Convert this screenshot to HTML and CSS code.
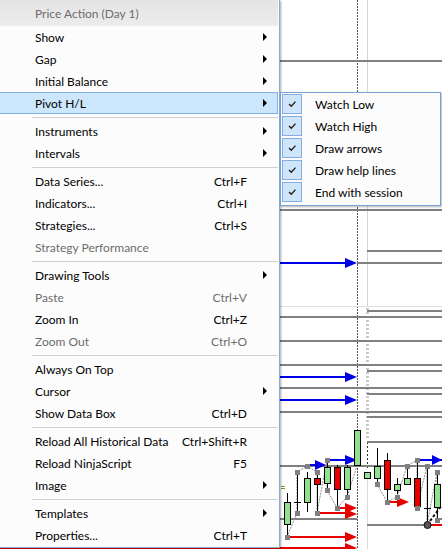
FILE: index.html
```html
<!DOCTYPE html>
<html>
<head>
<meta charset="utf-8">
<link rel="stylesheet" href="styles.css">
</head>
<body>
<div class="screen">
  <svg class="chart" width="442" height="549" viewBox="0 0 442 549" shape-rendering="crispEdges">
    <!-- vertical guides -->
    <line x1="367.5" y1="0" x2="367.5" y2="306" stroke="#d6d6d6" stroke-width="1"/>
    <line x1="367.5" y1="308" x2="367.5" y2="440" stroke="#c8c8c8" stroke-width="3" stroke-dasharray="2 2"/>
    <line x1="367.5" y1="442" x2="367.5" y2="470" stroke="#333" stroke-width="1" stroke-dasharray="2 2"/>
    <line x1="367.5" y1="472" x2="367.5" y2="549" stroke="#dcdcdc" stroke-width="1"/>
    <line x1="357.5" y1="0" x2="357.5" y2="549" stroke="#555" stroke-width="1" stroke-dasharray="2 1"/>
    <!-- panel divider -->
    <line x1="0" y1="306.5" x2="442" y2="306.5" stroke="#e0e0e0" stroke-width="1"/>
    <!-- gray level lines -->
    <g stroke="#808080" stroke-width="2">
      <line x1="0" y1="61" x2="442" y2="61"/>
      <line x1="0" y1="210" x2="442" y2="210"/>
      <line x1="367" y1="251" x2="442" y2="251"/>
      <line x1="357" y1="263" x2="442" y2="263"/>
      <line x1="367" y1="311" x2="442" y2="311"/>
      <line x1="0" y1="317" x2="442" y2="317"/>
      <line x1="0" y1="341" x2="442" y2="341"/>
      <line x1="0" y1="365" x2="442" y2="365"/>
      <line x1="367" y1="371" x2="442" y2="371"/>
      <line x1="0" y1="388" x2="442" y2="388"/>
      <line x1="367" y1="394" x2="442" y2="394"/>
      <line x1="0" y1="412" x2="442" y2="412"/>
      <line x1="367" y1="417" x2="442" y2="417"/>
      <line x1="367" y1="442" x2="442" y2="442"/>
      <line x1="0" y1="466" x2="442" y2="466"/>
      <line x1="0" y1="519" x2="357" y2="519"/>
      <line x1="437" y1="519" x2="442" y2="519"/>
      <line x1="367" y1="525" x2="442" y2="525"/>
    </g>
    <!-- dotted swing connectors -->
    <polyline points="287,537 297,513 297,472 307,466 317,472 317,513 327,460 327,490 337,508 347,497 357,466" fill="none" stroke="#909090" stroke-width="1" stroke-dasharray="2 1" shape-rendering="auto"/>
    <polyline points="377,484 387,502 397,497 407,466 417,460 417,508 427,466 427,525 437,472 437,520" fill="none" stroke="#909090" stroke-width="1" stroke-dasharray="2 1" shape-rendering="auto"/>
    <line x1="427" y1="525" x2="442" y2="505" stroke="#111" stroke-width="2" stroke-dasharray="3 2" shape-rendering="auto"/>
    <!-- blue arrows -->
    <g stroke="#0000e6" stroke-width="2">
      <line x1="280" y1="263" x2="347" y2="263"/>
      <line x1="280" y1="377" x2="347" y2="377"/>
      <line x1="280" y1="400" x2="347" y2="400"/>
      <line x1="328" y1="460" x2="347" y2="460"/>
      <line x1="310" y1="465" x2="318" y2="465"/>
      <line x1="418" y1="460" x2="442" y2="460"/>
    </g>
    <g fill="#0000e6" shape-rendering="auto">
      <polygon points="345,258 357,263 345,268"/>
      <polygon points="345,372 357,377 345,382"/>
      <polygon points="345,395 357,400 345,405"/>
      <polygon points="345,455 357,460 345,465"/>
      <polygon points="315,460 326,465 315,470"/>
      <polygon points="432,455 442,460 432,465"/>
    </g>
    <!-- red arrows -->
    <g stroke="#e60000" stroke-width="2">
      <line x1="338" y1="508" x2="347" y2="508"/>
      <line x1="318" y1="513" x2="347" y2="513"/>
      <line x1="287" y1="537" x2="347" y2="537"/>
      <line x1="0" y1="548" x2="347" y2="548"/>
      <line x1="387" y1="502" x2="399" y2="502"/>
      <line x1="430" y1="525" x2="442" y2="525"/>
    </g>
    <g fill="#e60000" shape-rendering="auto">
      <polygon points="345,503 357,508 345,513"/>
      <polygon points="345,509 357,514 345,519"/>
      <polygon points="345,532 357,537 345,542"/>
      <polygon points="345,543 357,548 345,553"/>
      <polygon points="397,497 409,502 397,507"/>
    </g>
    <!-- candle wicks -->
    <g stroke="#000" stroke-width="1">
      <line x1="287.5" y1="493" x2="287.5" y2="537"/>
      <line x1="297.5" y1="470" x2="297.5" y2="513"/>
      <line x1="294" y1="502.5" x2="301" y2="502.5"/>
      <line x1="307.5" y1="472" x2="307.5" y2="512"/>
      <line x1="317.5" y1="472" x2="317.5" y2="513"/>
      <line x1="327.5" y1="460" x2="327.5" y2="490"/>
      <line x1="337.5" y1="465" x2="337.5" y2="508"/>
      <line x1="347.5" y1="465" x2="347.5" y2="497"/>
      <line x1="377.5" y1="448" x2="377.5" y2="483"/>
      <line x1="387.5" y1="453" x2="387.5" y2="502"/>
      <line x1="397.5" y1="478" x2="397.5" y2="494"/>
      <line x1="407.5" y1="466" x2="407.5" y2="484"/>
      <line x1="417.5" y1="460" x2="417.5" y2="508"/>
      <line x1="427.5" y1="466" x2="427.5" y2="525"/>
      <line x1="424" y1="508.5" x2="431" y2="508.5"/>
      <line x1="437.5" y1="472" x2="437.5" y2="520"/>
    </g>
    <!-- candle bodies -->
    <g stroke="#000" stroke-width="1">
      <rect x="284.5" y="502.5" width="6" height="22" fill="#90e090"/>
      <rect x="304.5" y="478.5" width="6" height="24" fill="#90e090"/>
      <rect x="314.5" y="478.5" width="6" height="6" fill="#e60000"/>
      <rect x="324.5" y="467.5" width="6" height="16" fill="#90e090"/>
      <rect x="334.5" y="467.5" width="6" height="22" fill="#e60000"/>
      <rect x="344.5" y="467.5" width="6" height="22" fill="#90e090"/>
      <rect x="354.5" y="430.5" width="6" height="35" fill="#90e090"/>
      <rect x="364.5" y="472.5" width="6" height="6" fill="#90e090"/>
      <rect x="374.5" y="466.5" width="6" height="12" fill="#90e090"/>
      <rect x="384.5" y="460.5" width="6" height="29" fill="#e60000"/>
      <rect x="394.5" y="484.5" width="6" height="6" fill="#90e090"/>
      <rect x="404.5" y="478.5" width="6" height="6" fill="#90e090"/>
      <rect x="414.5" y="478.5" width="6" height="28" fill="#e60000"/>
      <rect x="434.5" y="484.5" width="6" height="23" fill="#90e090"/>
    </g>
    <!-- swing point markers -->
    <g fill="#808080">
      <rect x="285" y="535" width="5" height="5"/>
      <rect x="295" y="511" width="5" height="5"/>
      <rect x="295" y="470" width="5" height="5"/>
      <rect x="305" y="464" width="5" height="5"/>
      <rect x="315" y="470" width="5" height="5"/>
      <rect x="315" y="511" width="5" height="5"/>
      <rect x="325" y="458" width="5" height="5"/>
      <rect x="325" y="488" width="5" height="5"/>
      <rect x="335" y="506" width="5" height="5"/>
      <rect x="345" y="495" width="5" height="5"/>
      <rect x="375" y="482" width="5" height="5"/>
      <rect x="385" y="500" width="5" height="5"/>
      <rect x="395" y="495" width="5" height="5"/>
      <rect x="405" y="464" width="5" height="5"/>
      <rect x="415" y="458" width="5" height="5"/>
      <rect x="415" y="506" width="5" height="5"/>
      <rect x="425" y="464" width="5" height="5"/>
      <rect x="435" y="470" width="5" height="5"/>
      <rect x="435" y="518" width="5" height="5"/>
    </g>
    <circle cx="427.5" cy="525" r="3.5" fill="#555" stroke="#111" shape-rendering="auto"/>
    <g stroke="#6a9a3a" stroke-width="1">
      <line x1="281" y1="486.5" x2="285" y2="486.5"/>
      <line x1="281" y1="488.5" x2="285" y2="488.5"/>
    </g>
  </svg>

  <div class="menu">
    <div class="menu-title">Price Action (Day 1)</div>
    <div class="item"><span class="label">Show</span><span class="sub"><i class="tri"></i></span></div>
    <div class="item"><span class="label">Gap</span><span class="sub"><i class="tri"></i></span></div>
    <div class="item"><span class="label">Initial Balance</span><span class="sub"><i class="tri"></i></span></div>
    <div class="item active"><span class="label">Pivot H/L</span><span class="sub"><i class="tri"></i></span></div>
    <div class="sep"></div>
    <div class="item"><span class="label">Instruments</span><span class="sub"><i class="tri"></i></span></div>
    <div class="item"><span class="label">Intervals</span><span class="sub"><i class="tri"></i></span></div>
    <div class="sep"></div>
    <div class="item"><span class="label">Data Series...</span><span class="key">Ctrl+F</span><span class="sub"></span></div>
    <div class="item"><span class="label">Indicators...</span><span class="key">Ctrl+I</span><span class="sub"></span></div>
    <div class="item"><span class="label">Strategies...</span><span class="key">Ctrl+S</span><span class="sub"></span></div>
    <div class="item disabled"><span class="label">Strategy Performance</span><span class="sub"></span></div>
    <div class="sep"></div>
    <div class="item"><span class="label">Drawing Tools</span><span class="sub"><i class="tri"></i></span></div>
    <div class="item disabled"><span class="label">Paste</span><span class="key">Ctrl+V</span><span class="sub"></span></div>
    <div class="item"><span class="label">Zoom In</span><span class="key">Ctrl+Z</span><span class="sub"></span></div>
    <div class="item disabled"><span class="label">Zoom Out</span><span class="key">Ctrl+O</span><span class="sub"></span></div>
    <div class="sep"></div>
    <div class="item"><span class="label">Always On Top</span><span class="sub"></span></div>
    <div class="item"><span class="label">Cursor</span><span class="sub"><i class="tri"></i></span></div>
    <div class="item"><span class="label">Show Data Box</span><span class="key">Ctrl+D</span><span class="sub"></span></div>
    <div class="sep"></div>
    <div class="item"><span class="label">Reload All Historical Data</span><span class="key">Ctrl+Shift+R</span><span class="sub"></span></div>
    <div class="item"><span class="label">Reload NinjaScript</span><span class="key">F5</span><span class="sub"></span></div>
    <div class="item"><span class="label">Image</span><span class="sub"><i class="tri"></i></span></div>
    <div class="sep"></div>
    <div class="item"><span class="label">Templates</span><span class="sub"><i class="tri"></i></span></div>
    <div class="item"><span class="label">Properties...</span><span class="key">Ctrl+T</span><span class="sub"></span></div>
  </div>

  <div class="submenu">
    <div class="check-item"><span class="box"><svg width="20" height="20" viewBox="0 0 20 20"><path d="M7 10 L9.3 12.3 L13.5 7.6" fill="none" stroke="#1a1a1a" stroke-width="1.3"/></svg></span><span class="label">Watch Low</span></div>
    <div class="check-item"><span class="box"><svg width="20" height="20" viewBox="0 0 20 20"><path d="M7 10 L9.3 12.3 L13.5 7.6" fill="none" stroke="#1a1a1a" stroke-width="1.3"/></svg></span><span class="label">Watch High</span></div>
    <div class="check-item"><span class="box"><svg width="20" height="20" viewBox="0 0 20 20"><path d="M7 10 L9.3 12.3 L13.5 7.6" fill="none" stroke="#1a1a1a" stroke-width="1.3"/></svg></span><span class="label">Draw arrows</span></div>
    <div class="check-item"><span class="box"><svg width="20" height="20" viewBox="0 0 20 20"><path d="M7 10 L9.3 12.3 L13.5 7.6" fill="none" stroke="#1a1a1a" stroke-width="1.3"/></svg></span><span class="label">Draw help lines</span></div>
    <div class="check-item"><span class="box"><svg width="20" height="20" viewBox="0 0 20 20"><path d="M7 10 L9.3 12.3 L13.5 7.6" fill="none" stroke="#1a1a1a" stroke-width="1.3"/></svg></span><span class="label">End with session</span></div>
  </div>
</div>
</body>
</html>
```

FILE: styles.css
```css
* { box-sizing: border-box; }
html, body { margin: 0; padding: 0; background: #fff; }
body {
  font-family: "Segoe UI", "Lato", "Noto Sans", sans-serif;
  font-size: 12px;
  color: #000;
}
.screen {
  position: relative;
  width: 442px;
  height: 549px;
  overflow: hidden;
  background: #fff;
}
.chart {
  position: absolute;
  left: 0;
  top: 0;
}
.menu {
  position: absolute;
  left: 0;
  top: 0;
  width: 280px;
  height: 548px;
  background: #fcfcfc;
  border-right: 1px solid #8aa9d0;
  border-bottom: 1px solid #8aa9d0;
  box-shadow: 1px 1px 2px rgba(0,0,0,0.35);
  display: flex;
  flex-direction: column;
  z-index: 2;
}
.menu-title {
  height: 26px;
  line-height: 27px;
  padding-left: 35px;
  margin-right: 1px;
  background: linear-gradient(#e4e4e4, #ececec);
  color: #6d6d6d;
}
.item {
  height: 22px;
  display: flex;
  align-items: center;
  padding-left: 35px;
  padding-right: 10px;
  margin-right: 1px;
  border: 1px solid transparent;
  border-left: 0;
}
.item .label { flex: 1; white-space: nowrap; }
.item .key { white-space: nowrap; text-align: right; }
.item .sub {
  width: 20px;
  display: flex;
  justify-content: flex-end;
  align-items: center;
}
.tri {
  display: block;
  width: 0;
  height: 0;
  border-left: 4px solid #000;
  border-top: 4px solid transparent;
  border-bottom: 4px solid transparent;
}
.item.active {
  background: #cce6fb;
  border-color: #7fb1e6;
}
.item.disabled { color: #6d6d6d; }
.sep {
  height: 6px;
  margin-left: 32px;
  margin-right: 1px;
  display: flex;
  align-items: center;
}
.sep::before {
  content: "";
  display: block;
  width: 100%;
  height: 1px;
  background: #cfcfcf;
}
.submenu {
  position: absolute;
  left: 280px;
  top: 92px;
  width: 161px;
  height: 114px;
  background: #fcfcfc;
  border: 1px solid #79a1d3;
  box-shadow: 1px 1px 2px rgba(0,0,0,0.3);
  padding: 0 1px;
  display: flex;
  flex-direction: column;
  z-index: 3;
}
.check-item {
  height: 22px;
  display: flex;
  align-items: center;
}
.check-item .box {
  width: 20px;
  height: 20px;
  background: #cfe5f9;
  border: 1px solid #85ace0;
  display: flex;
  align-items: center;
  justify-content: center;
  margin-right: 13px;
}
.check-item .box svg { display: block; flex: none; }
.check-item .label { white-space: nowrap; }
```
